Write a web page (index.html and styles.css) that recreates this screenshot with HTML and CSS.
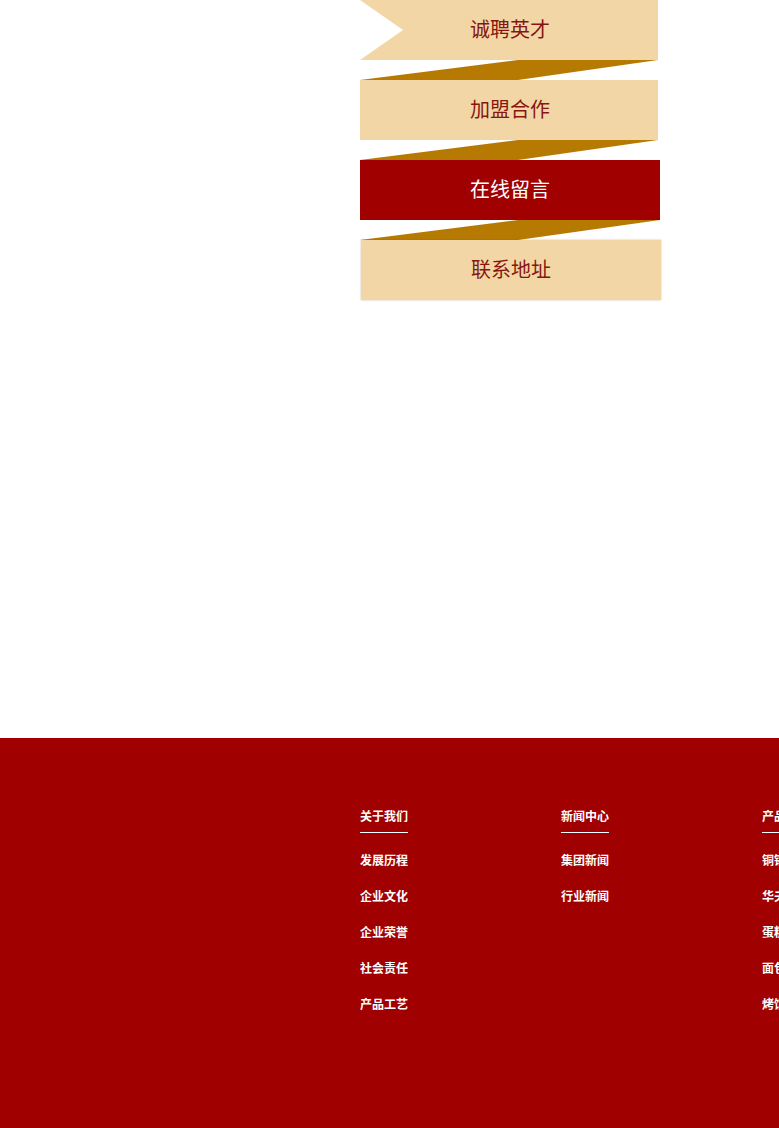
FILE: index.html
```html
<!DOCTYPE html>
<html lang="zh-CN">
<head>
<meta charset="utf-8">
<title>导航</title>
<link rel="stylesheet" href="styles.css">
</head>
<body>
<div class="page">
  <div class="nav">
    <a class="tab tab-notch">诚聘英才</a>
    <svg class="fold" width="300" height="20" viewBox="0 0 300 20"><polygon points="158,0 298,0 158,20 0,20" fill="#b67a02"/></svg>
    <a class="tab">加盟合作</a>
    <svg class="fold" width="300" height="20" viewBox="0 0 300 20"><polygon points="158,0 298,0 158,20 0,20" fill="#b67a02"/></svg>
    <a class="tab tab-active">在线留言</a>
    <svg class="fold" width="300" height="20" viewBox="0 0 300 20"><polygon points="158,0 300,0 158,20 0,20" fill="#b67a02"/></svg>
    <a class="tab tab-last">联系地址</a>
  </div>
</div>
<footer class="footer">
  <div class="cols">
    <div class="col">
      <div class="col-title">关于我们</div>
      <ul class="links">
        <li>发展历程</li>
        <li>企业文化</li>
        <li>企业荣誉</li>
        <li>社会责任</li>
        <li>产品工艺</li>
      </ul>
    </div>
    <div class="col">
      <div class="col-title">新闻中心</div>
      <ul class="links">
        <li>集团新闻</li>
        <li>行业新闻</li>
      </ul>
    </div>
    <div class="col">
      <div class="col-title">产品中心</div>
      <ul class="links">
        <li>铜锣烧</li>
        <li>华夫饼</li>
        <li>蛋糕系列</li>
        <li>面包系列</li>
        <li>烤馍系列</li>
      </ul>
    </div>
  </div>
</footer>
</body>
</html>
```
FILE: styles.css
```css
html, body {
  margin: 0;
  padding: 0;
}
body {
  width: 779px;
  overflow: hidden;
  font-family: "Noto Sans CJK SC", "Microsoft YaHei", sans-serif;
  background: #ffffff;
}
.page {
  height: 738px;
  padding-left: 360px;
  box-sizing: border-box;
}
.nav {
  width: 302px;
  display: flex;
  flex-direction: column;
}
.fold {
  display: block;
}
.tab {
  display: flex;
  align-items: center;
  justify-content: center;
  width: 298px;
  height: 60px;
  box-sizing: border-box;
  padding: 0 0 3px 2px;
  background: #f3d6a5;
  color: #86160f;
  font-size: 20px;
  font-weight: 400;
  text-decoration: none;
}
.tab-notch {
  clip-path: polygon(0 0, 100% 0, 100% 100%, 0 100%, 43px 30px);
}
.tab-active {
  width: 300px;
  padding-left: 0;
  background: #a00000;
  color: #ffffff;
}
.tab-last {
  width: 300px;
  margin-left: 1px;
  padding-left: 0;
  box-shadow: 0 0 2px rgba(120, 80, 20, 0.35);
}
.footer {
  height: 390px;
  background: #a00000;
  box-sizing: border-box;
  padding: 69px 0 0 360px;
}
.cols {
  display: flex;
  width: 700px;
}
.col {
  width: 201px;
  flex: none;
  font-size: 12px;
  line-height: 18px;
}
.col-title {
  display: block;
  width: fit-content;
  color: #ffffff;
  font-size: 12px;
  font-weight: 700;
  line-height: 18px;
  padding-bottom: 7px;
  border-bottom: 1px solid #ffffff;
}
.links {
  list-style: none;
  margin: 0;
  padding: 18px 0 0 0;
}
.links li {
  color: #ffffff;
  font-size: 12px;
  font-weight: 700;
  line-height: 18px;
  margin-bottom: 18px;
  white-space: nowrap;
}
```
